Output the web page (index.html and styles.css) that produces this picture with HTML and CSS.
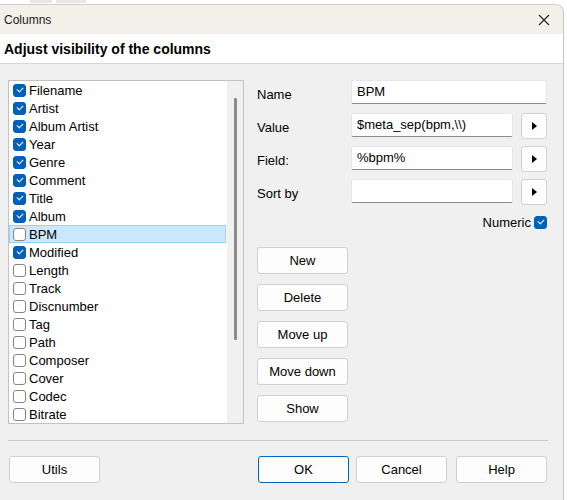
FILE: index.html
```html
<!DOCTYPE html>
<html>
<head>
<meta charset="utf-8">
<link rel="stylesheet" href="styles.css">
</head>
<body>
<div class="behind"><span class="ghost g1"></span><span class="ghost g2"></span></div>
<div class="window">
  <div class="titlebar">
    <span class="title">Columns</span>
    <svg class="close" width="12" height="12" viewBox="0 0 12 12"><path d="M1 1L11 11M11 1L1 11" stroke="#222" stroke-width="1.1"/></svg>
  </div>
  <div class="header">Adjust visibility of the columns</div>
  <div class="body">
    <div class="main">
      <div class="listbox">
        <ul class="list">
          <li><span class="cb on"></span>Filename</li>
          <li><span class="cb on"></span>Artist</li>
          <li><span class="cb on"></span>Album Artist</li>
          <li><span class="cb on"></span>Year</li>
          <li><span class="cb on"></span>Genre</li>
          <li><span class="cb on"></span>Comment</li>
          <li><span class="cb on"></span>Title</li>
          <li><span class="cb on"></span>Album</li>
          <li class="sel"><span class="cb"></span>BPM</li>
          <li><span class="cb on"></span>Modified</li>
          <li><span class="cb"></span>Length</li>
          <li><span class="cb"></span>Track</li>
          <li><span class="cb"></span>Discnumber</li>
          <li><span class="cb"></span>Tag</li>
          <li><span class="cb"></span>Path</li>
          <li><span class="cb"></span>Composer</li>
          <li><span class="cb"></span>Cover</li>
          <li><span class="cb"></span>Codec</li>
          <li><span class="cb"></span>Bitrate</li>
        </ul>
        <div class="scroll"><div class="thumb"></div></div>
      </div>
      <div class="panel">
        <div class="row"><label>Name</label><div class="input wide">BPM</div></div>
        <div class="row"><label>Value</label><div class="input">$meta_sep(bpm,\\)</div><button class="arrow"><span class="tri"></span></button></div>
        <div class="row"><label>Field:</label><div class="input">%bpm%</div><button class="arrow"><span class="tri"></span></button></div>
        <div class="row"><label>Sort by</label><div class="input"></div><button class="arrow"><span class="tri"></span></button></div>
        <div class="numeric">Numeric<span class="cb on"></span></div>
        <div class="actions">
          <button class="btn">New</button>
          <button class="btn">Delete</button>
          <button class="btn">Move up</button>
          <button class="btn">Move down</button>
          <button class="btn">Show</button>
        </div>
      </div>
    </div>
    <div class="sep"></div>
    <div class="footer">
      <button class="btn">Utils</button>
      <div class="right">
        <button class="btn default">OK</button>
        <button class="btn">Cancel</button>
        <button class="btn">Help</button>
      </div>
    </div>
  </div>
</div>
</body>
</html>
```
FILE: styles.css
```css
* { box-sizing: border-box; }
html, body { margin: 0; padding: 0; background: #ffffff; }
body {
  font-family: "Liberation Sans", Arial, sans-serif;
  font-size: 13px;
  color: #000;
  width: 567px;
  height: 500px;
  overflow: hidden;
}
.behind { height: 4px; position: relative; }
.ghost { position: absolute; top: 0; height: 3px; background: #e6e6e6; }
.g1 { left: 30px; width: 22px; }
.g2 { left: 56px; width: 30px; }

.window {
  width: 564px;
  height: 496px;
  border-top: 1px solid #cfcfcf;
  border-right: 1px solid #c4c4c4;
  border-top-right-radius: 8px;
  overflow: hidden;
  background: #f0f0f0;
  display: flex;
  flex-direction: column;
}
.titlebar {
  height: 29px;
  background: #f3f0e9;
  display: flex;
  align-items: center;
  justify-content: space-between;
  padding: 1px 13px 0 4px;
  font-size: 12px;
}
.title { color: #1a1a1a; }
.close { display: block; }
.header {
  height: 30px;
  background: #fff;
  border-bottom: 1px solid #d8d8d8;
  font-weight: bold;
  font-size: 14px;
  display: flex;
  align-items: center;
  padding-left: 4px;
}
.body {
  flex: 1;
  padding: 16px 16px 0 8px;
  display: flex;
  flex-direction: column;
}
.main { display: flex; gap: 13px; height: 344px; }
.listbox {
  width: 236px;
  height: 344px;
  border: 1px solid #c2c2c2;
  background: #fff;
  display: flex;
}
.list {
  list-style: none;
  margin: 0;
  padding: 0;
  flex: 1;
}
.list li {
  height: 18px;
  display: flex;
  align-items: center;
  padding-left: 3px;
  white-space: nowrap;
  border: 1px solid transparent;
  margin-right: 1px;
}
.list li.sel { background: #cce8ff; border-color: #99d1ff; }
.cb {
  width: 13px;
  height: 13px;
  border: 1px solid #858585;
  border-radius: 3px;
  background: #fff;
  margin-right: 3px;
  flex: none;
  position: relative;
}
.cb.on {
  background: #005fb8;
  border-color: #005fb8;
}
.cb.on::after {
  content: "";
  position: absolute;
  left: 3px;
  top: 2px;
  width: 5px;
  height: 3px;
  border-left: 1px solid #fff;
  border-bottom: 1px solid #fff;
  transform: rotate(-45deg);
}
.scroll {
  width: 16px;
  background: #f0f0f0;
  padding-top: 17px;
  display: flex;
  justify-content: center;
}
.thumb { width: 3px; height: 242px; background: #8b8b8b; border-radius: 1px; }

.panel { flex: 1; display: flex; flex-direction: column; }
.row { display: flex; align-items: flex-start; height: 25px; margin-bottom: 8px; }
.row label { width: 94px; padding-top: 7px; }
.input {
  width: 162px;
  height: 24px;
  background: #fff;
  border: 1px solid #e6e6e6;
  border-bottom: 1px solid #8c8c8c;
  border-radius: 2px;
  padding: 3px 5px;
}
.input.wide { width: 196px; }
.arrow {
  margin-left: 8px;
  width: 26px;
  height: 26px;
  background: #fdfdfd;
  border: 1px solid #d2d2d2;
  border-radius: 3px;
  display: flex;
  align-items: center;
  justify-content: center;
  padding: 0;
}
.tri {
  width: 0; height: 0;
  border-left: 5px solid #000;
  border-top: 4px solid transparent;
  border-bottom: 4px solid transparent;
  margin-left: 1px;
}
.numeric {
  display: flex;
  justify-content: flex-end;
  align-items: center;
  gap: 3px;
  margin-top: 3px;
  height: 15px;
}
.numeric .cb { margin-right: 0; }
.actions {
  margin-top: 17px;
  display: flex;
  flex-direction: column;
  gap: 10px;
}
.btn {
  font-family: "Liberation Sans", Arial, sans-serif;
  font-size: 13px;
  color: #000;
  width: 91px;
  height: 27px;
  background: #fdfdfd;
  border: 1px solid #d0d0d0;
  border-radius: 3px;
  padding: 0;
}
.btn.default { border-color: #0067c0; }
.sep { height: 1px; background: #c8c8c8; margin-top: 16px; width: 540px; }
.footer {
  margin-top: 15px;
  display: flex;
  justify-content: space-between;
  padding-left: 1px;
}
.right { display: flex; gap: 7px; }
.right .btn:last-child { margin-left: 2px; }
```
